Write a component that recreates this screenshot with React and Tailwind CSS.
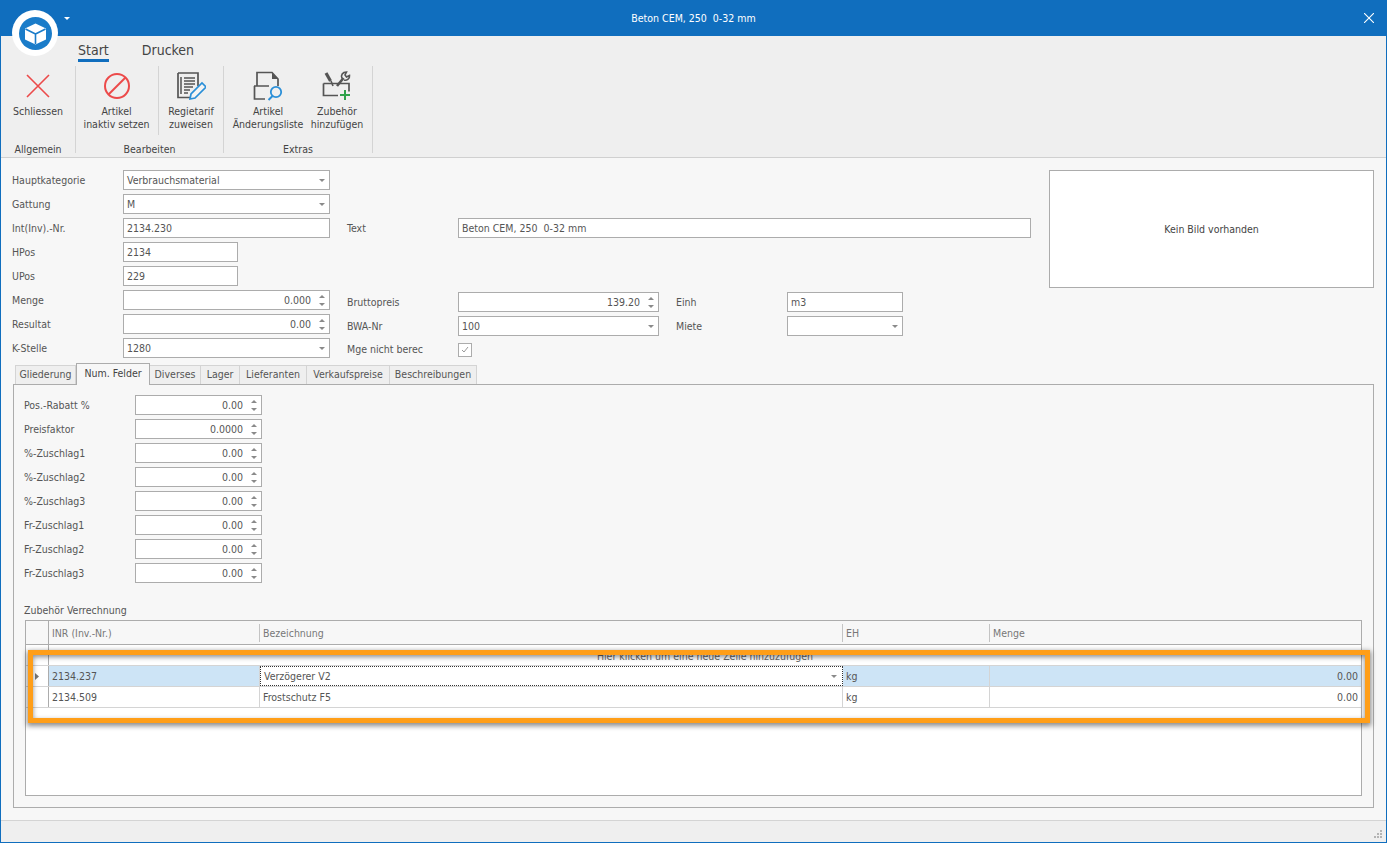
import React from 'react'

const FONT = "font-['DejaVu_Sans_Condensed','Noto_Sans',sans-serif]"

const Caret = () => (
  <svg width="6" height="3" viewBox="0 0 6 3" className="shrink-0">
    <path d="M0 0h6L3 3z" fill="#8a8a8a" />
  </svg>
)

const Spin = () => (
  <div className="flex flex-col gap-[5px] shrink-0 w-[6px] ml-[8px] mr-[4px]">
    <svg width="6" height="3" viewBox="0 0 6 3"><path d="M0 3h6L3 0z" fill="#8a8a8a" /></svg>
    <svg width="6" height="3" viewBox="0 0 6 3"><path d="M0 0h6L3 3z" fill="#8a8a8a" /></svg>
  </div>
)

const Field = ({ w, value, kind, h = 'h-5' }) => (
  <div className={`${w} ${h} shrink-0 bg-white border border-[#acacac] flex items-center text-[#555] pl-[3px]`}>
    <span className={`flex-1 pt-[2px] whitespace-pre ${kind === 'spin' ? 'text-right' : ''}`}>{value}</span>
    {kind === 'select' && <span className="mr-[4px] flex"><Caret /></span>}
    {kind === 'spin' && <Spin />}
  </div>
)

const Row = ({ label, labelW = 'w-[111px]', ...rest }) => (
  <div className="flex items-center h-5">
    <span className={`${labelW} shrink-0 pt-[2px] whitespace-nowrap text-[#555]`}>{label}</span>
    <Field {...rest} />
  </div>
)

const RibbonButton = ({ icon, lines, w }) => (
  <div className={`${w} flex flex-col items-center`}>
    <div className="h-[32px] flex items-center justify-center">{icon}</div>
    <div className="mt-[3px] text-center leading-[13px] text-[#444] whitespace-nowrap">
      {lines.map(l => <div key={l}>{l}</div>)}
    </div>
  </div>
)

const CloseIcon = () => (
  <svg width="28" height="28" viewBox="0 0 28 28"><path d="M3 3l22 22M25 3L3 25" stroke="#ec4a4a" strokeWidth="1.6" fill="none" /></svg>
)

const BanIcon = () => (
  <svg width="28" height="28" viewBox="0 0 28 28" fill="none" stroke="#ec4a4a" strokeWidth="2">
    <circle cx="14" cy="14" r="12" />
    <path d="M5.500 22.500l17-17" />
  </svg>
)

const NoteIcon = () => (
  <svg width="30" height="30" viewBox="0 0 30 30" fill="none">
    <path d="M2 2h20v13M19 26.500H2V2" stroke="#555" strokeWidth="1.700" />
    <path d="M8 7h11M8 10h11M8 13h11M8 16h9M8 19h6M8 22h4" stroke="#555" strokeWidth="1.300" />
    <path d="M5 6v17" stroke="#555" strokeWidth="1.500" />
    <path d="M14 28l1-5 11-11 4 4-11 11z" fill="#f4f4f4" stroke="#2a8fd8" strokeWidth="1.700" />
  </svg>
)

const DocSearchIcon = () => (
  <svg width="30" height="30" viewBox="0 0 30 30" fill="none">
    <path d="M4 15V1.500h15l6 6.500v7" stroke="#555" strokeWidth="1.700" />
    <path d="M19 2v6h6z" fill="#555" />
    <path d="M1 15h15M1.500 15v13H12" stroke="#555" strokeWidth="1.700" />
    <circle cx="23" cy="21" r="5.200" stroke="#2a8fd8" strokeWidth="1.800" />
    <path d="M19.500 25l-4 4" stroke="#2a8fd8" strokeWidth="2" />
  </svg>
)

const ToolboxIcon = () => (
  <svg width="30" height="30" viewBox="0 0 30 30" fill="none">
    <path d="M1.500 12.500h25.500v8M1.500 12.500V24.500H16" stroke="#555" strokeWidth="1.700" />
    <path d="M4 2l4.500 8" stroke="#555" strokeWidth="3.200" />
    <path d="M9 10l2 5" stroke="#555" strokeWidth="1.600" />
    <path d="M15 15l6.500-8" stroke="#555" strokeWidth="2.600" />
    <path d="M20 7.500c-1.500-3.500.5-6.500 4.500-6.500L23 4l1.500 2L27.500 4.500c.5 3.500-3 5.500-5.500 4.500" stroke="#555" strokeWidth="1.600" />
    <path d="M23 19v10M18 24h10" stroke="#2fa24b" strokeWidth="2" />
  </svg>
)

const Group = ({ label, w, children }) => (
  <div className={`${w} shrink-0 border-r border-[#d4d4d4] flex flex-col items-stretch h-[87px]`}>
    <div className="flex-1 flex justify-center">{children}</div>
    <div className="text-center text-[#444] leading-[8px]">{label}</div>
  </div>
)

const tabs = [
  ['Gliederung', 'w-[61px]'],
  ['Num. Felder', 'w-[74px]'],
  ['Diverses', 'w-[51px]'],
  ['Lager', 'w-[39px]'],
  ['Lieferanten', 'w-[67px]'],
  ['Verkaufspreise', 'w-[83px]'],
  ['Beschreibungen', 'w-[87px]'],
]

const numRows = [
  ['Pos.-Rabatt %', '0.00'],
  ['Preisfaktor', '0.0000'],
  ['%-Zuschlag1', '0.00'],
  ['%-Zuschlag2', '0.00'],
  ['%-Zuschlag3', '0.00'],
  ['Fr-Zuschlag1', '0.00'],
  ['Fr-Zuschlag2', '0.00'],
  ['Fr-Zuschlag3', '0.00'],
]

const COLS = 'grid grid-cols-[23px_211px_583px_147px_1fr]'

const App = () => {
  return (
    <div className={`relative w-[1387px] h-[843px] overflow-hidden flex flex-col border-x border-b border-[#106ebe] bg-[#f7f7f7] text-[10.5px] ${FONT}`}>
      {/* title bar */}
      <div className="-mx-px h-9 shrink-0 bg-[#106ebe] flex items-center justify-center relative text-white">
        <span className="whitespace-pre pt-[2px]">Beton CEM, 250  0-32 mm</span>
        <svg width="10" height="10" viewBox="0 0 10 10" className="absolute right-[13px] top-[13px]">
          <path d="M0 0l10 10M10 0L0 10" stroke="#fff" strokeWidth="1.100" />
        </svg>
      </div>

      {/* logo */}
      <div className="absolute left-[11px] top-[10px] w-[46px] h-[46px] rounded-full bg-white flex items-center justify-center">
        <svg width="33" height="33" viewBox="0 0 33 33">
          <circle cx="16.500" cy="16.500" r="16.500" fill="#1a7cc9" />
          <path d="M16.500 6.500L27 11.500v11l-10.500 5-10.500-5v-11z" fill="#fff" />
          <path d="M16.500 17l10-5M16.500 17l-10-5M16.500 17v10" stroke="#1a7cc9" strokeWidth="1.600" fill="none" />
        </svg>
      </div>
      <svg width="6" height="3" viewBox="0 0 6 3" className="absolute left-[63px] top-[17px]"><path d="M0 0h6L3 3z" fill="#fff" /></svg>

      {/* ribbon */}
      <div className="shrink-0 h-[122px] bg-[#efefef] border-b border-[#d0d0d0] flex flex-col">
        <div className="flex h-[30px] pl-[77px] gap-[33px] text-[14px] text-[#444]">
          <div className="mt-[5px] h-[21px] border-b-[3px] border-[#106ebe] leading-[18px]">Start</div>
          <div className="mt-[5px] leading-[18px]">Drucken</div>
        </div>
        <div className="flex">
          <Group label="Allgemein" w="w-[75px]">
            <div className="pt-[4px]"><RibbonButton w="w-[75px]" icon={<CloseIcon />} lines={['Schliessen']} /></div>
          </Group>
          <Group label="Bearbeiten" w="w-[148px]">
            <div className="pt-[4px] border-r border-[#d4d4d4] h-[69px]"><RibbonButton w="w-[82px]" icon={<BanIcon />} lines={['Artikel', 'inaktiv setzen']} /></div>
            <div className="pt-[4px]"><RibbonButton w="w-[65px]" icon={<NoteIcon />} lines={['Regietarif', 'zuweisen']} /></div>
          </Group>
          <Group label="Extras" w="w-[149px]">
            <div className="pt-[4px]"><RibbonButton w="w-[78px]" icon={<DocSearchIcon />} lines={['Artikel', 'Änderungsliste']} /></div>
            <div className="pt-[4px]"><RibbonButton w="w-[60px]" icon={<ToolboxIcon />} lines={['Zubehör', 'hinzufügen']} /></div>
          </Group>
        </div>
      </div>

      {/* main form */}
      <div className="flex-1 flex flex-col pl-[11px] pr-3 pt-3">
        <div className="flex h-[192px]">
          <div className="w-[318px] shrink-0 flex flex-col gap-1">
            <Row label="Hauptkategorie" w="w-[207px]" value="Verbrauchsmaterial" kind="select" />
            <Row label="Gattung" w="w-[207px]" value="M" kind="select" />
            <Row label="Int(Inv).-Nr." w="w-[207px]" value="2134.230" />
            <Row label="HPos" w="w-[115px]" value="2134" />
            <Row label="UPos" w="w-[115px]" value="229" />
            <Row label="Menge" w="w-[207px]" value="0.000" kind="spin" />
            <Row label="Resultat" w="w-[207px]" value="0.00" kind="spin" />
            <Row label="K-Stelle" w="w-[207px]" value="1280" kind="select" />
          </div>
          <div className="ml-[17px] w-[684px] shrink-0 flex flex-col pt-[48px]">
            <Row label="Text" w="w-[573px]" value="Beton CEM, 250  0-32 mm" />
            <div className="mt-[54px] flex">
              <div className="flex flex-col gap-1">
                <Row label="Bruttopreis" w="w-[201px]" value="139.20" kind="spin" />
                <Row label="BWA-Nr" w="w-[201px]" value="100" kind="select" />
                <div className="flex items-center h-5">
                  <span className="w-[111px] shrink-0 text-[#555]">Mge nicht berec</span>
                  <div className="w-3.5 h-3.5 mb-px bg-white border border-[#acacac] flex items-center justify-center">
                    <svg width="8" height="7" viewBox="0 0 8 7"><path d="M1 4l2 2 4-5" stroke="#999" fill="none" /></svg>
                  </div>
                </div>
              </div>
              <div className="ml-[17px] flex flex-col gap-1">
                <Row label="Einh" w="w-[116px]" value="m3" />
                <Row label="Miete" w="w-[116px]" value="" kind="select" />
              </div>
            </div>
          </div>
          <div className="ml-[18px] w-[325px] h-[118px] shrink-0 bg-white border border-[#acacac] flex items-center justify-center text-[#444]">
            <span className="pt-[2px]">Kein Bild vorhanden</span>
          </div>
        </div>

        {/* tabs */}
        <div className="flex items-end h-[22px] pl-[3px] shrink-0">
          {tabs.map(([t, w], i) => (
            i === 1
              ? <div key={t} className={`${w} h-[22px] bg-[#f7f7f7] border border-b-0 border-[#acacac] -mb-px relative z-10 flex items-center justify-center text-[#444] pb-[2px]`}>{t}</div>
              : <div key={t} className={`${w} h-[19px] bg-[#efefef] border border-l-0 first:border-l border-b-0 border-[#d4d4d4] flex items-center justify-center text-[#555]`}>{t}</div>
          ))}
        </div>
        <div className="ml-px h-[424px] border border-[#acacac] flex flex-col pl-[10px] pr-[11px] pt-[10px] shrink-0">
          <div className="flex flex-col gap-1">
            {numRows.map(([l, v]) => (
              <Row key={l} label={l} labelW="w-[111px]" w="w-[127px]" value={v} kind="spin" />
            ))}
          </div>
          <div className="mt-[20px] text-[#555] leading-[14px]">Zubehör Verrechnung</div>
          {/* grid */}
          <div className="mt-[3px] ml-px h-[176px] border border-[#acacac] bg-white flex flex-col text-[#555]">
            <div className={`${COLS} h-[24px] bg-[#f7f7f7] border-b border-[#acacac] text-[#777]`}>
              <div className="border-r border-[#acacac]" />
              <div className="flex items-center pl-[3px] pt-[2px]">INR (Inv.-Nr.)</div>
              {['Bezeichnung', 'EH', 'Menge'].map(h => (
                <div key={h} className="flex items-center">
                  <div className="h-[18px] flex items-center pl-[3px] pt-[2px] border-l border-[#c4c4c4] -ml-px">{h}</div>
                </div>
              ))}
            </div>
            <div className="h-[21px] flex relative border-b border-[#d4d4d4]">
              <div className="w-[23px] border-r border-[#acacac] flex justify-center pt-[6px]">
                <span className="text-[#999] text-[9px] leading-[9px]">*</span>
              </div>
              <div className="flex-1 text-center leading-[23px] text-[#666]">Hier klicken um eine neue Zeile hinzuzufügen</div>
            </div>
            <div className={`${COLS} h-[21px] border-b border-[#d4d4d4]`}>
              <div className="border-r border-[#acacac] flex items-center justify-center">
                <svg width="4" height="7" viewBox="0 0 4 7"><path d="M0 0l4 3.500L0 7z" fill="#777" /></svg>
              </div>
              <div className="bg-[#cde4f6] flex items-center pl-[3px] pt-[2px] border-r border-[#d4d4d4]">2134.237</div>
              <div className="bg-white flex items-center pl-[3px] pr-[5px] border border-dotted border-[#333]">
                <span className="flex-1 pt-[2px]">Verzögerer V2</span><Caret />
              </div>
              <div className="bg-[#cde4f6] flex items-center pl-[3px] pt-[2px] border-r border-[#d4d4d4]">kg</div>
              <div className="bg-[#cde4f6] flex items-center justify-end pr-[3px] pt-[2px]">0.00</div>
            </div>
            <div className={`${COLS} h-[21px] border-b border-[#d4d4d4]`}>
              <div className="border-r border-[#acacac]" />
              <div className="flex items-center pl-[3px] pt-[2px] border-r border-[#d4d4d4]">2134.509</div>
              <div className="flex items-center pl-[3px] pt-[2px] border-r border-[#d4d4d4]">Frostschutz F5</div>
              <div className="flex items-center pl-[3px] pt-[2px] border-r border-[#d4d4d4]">kg</div>
              <div className="flex items-center justify-end pr-[3px] pt-[2px]">0.00</div>
            </div>
          </div>
        </div>
      </div>

      {/* status bar */}
      <div className="shrink-0 h-[22px] bg-[#efefef] border-t border-[#d4d4d4] flex justify-end items-end pr-[4px] pb-[4px]">
        <div className="grid grid-cols-3 gap-[1px]">
          {[0, 0, 1, 0, 1, 1, 1, 1, 1].map((on, i) => (
            <div key={i} className={`w-[2px] h-[2px] ${on ? 'bg-[#b4b4b4]' : ''}`} />
          ))}
        </div>
      </div>

      {/* orange highlight */}
      <div className="absolute left-[27px] top-[650px] w-[1342px] h-[73px] border-[5px] border-[#ff9e18] shadow-[0_2px_5px_1px_rgba(0,0,0,0.45),inset_0_2px_5px_rgba(0,0,0,0.45)] pointer-events-none" />
    </div>
  )
}

export default App
